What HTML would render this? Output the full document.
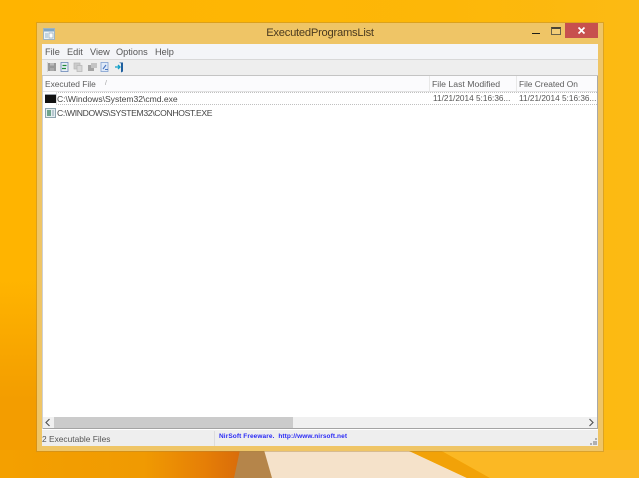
<!DOCTYPE html>
<html>
<head>
<meta charset="utf-8">
<style>
html,body{margin:0;padding:0;width:639px;height:478px;overflow:hidden}
body{position:relative;background:#fcb90f;font-family:"Liberation Sans",sans-serif;font-size:8.5px;color:#555}
div{position:absolute;white-space:nowrap}
.bg{left:0;top:0;width:639px;height:478px;background:linear-gradient(90deg,rgba(255,180,0,1) 0%,rgba(253,183,8,1) 70%,rgba(252,186,20,1) 100%)}
.bg2{left:0;top:280px;width:300px;height:198px;background:linear-gradient(180deg,rgba(243,157,0,0) 0%,rgba(243,157,0,1) 60%)}
.t{line-height:12px;filter:blur(.25px)}
svg{filter:blur(.25px)}
</style>
</head>
<body>
<div class="bg"></div>
<div class="bg2"></div>
<svg style="position:absolute;left:0;top:0" width="639" height="478">
<defs><linearGradient id="o" x1="0" x2="1" y1="0" y2="0"><stop offset="0" stop-color="#f4a000"/><stop offset=".6" stop-color="#f09a02"/><stop offset=".85" stop-color="#e67f06"/><stop offset="1" stop-color="#d96c0a"/></linearGradient></defs>
<polygon points="0,450 240,450 235,478 0,478" fill="url(#o)"/>
<polygon points="240,450 265,450 272,478 234,478" fill="#b5854a"/>
<polygon points="264,450 407,450 467,478 272,478" fill="#f5e2ca"/>
<polygon points="407,450 440,450 490,478 467,478" fill="#f2a208"/>
<polygon points="440,450 639,450 639,478 490,478" fill="#fbb824"/>
</svg>

<!-- window frame -->
<div style="left:37px;top:23px;width:566px;height:428px;background:#efc566;box-shadow:0 0 0 1px rgba(170,130,60,.4)"></div>
<!-- app icon -->
<svg style="position:absolute;left:43px;top:28px" width="12" height="12"><rect x=".5" y=".5" width="11" height="11" fill="#eef3f6" stroke="#9fb4c2"/><rect x="1" y="1" width="10" height="2.500" fill="#7fa6c6"/><rect x="6" y="5" width="4" height="5" fill="#fff" stroke="#8fa6b5" stroke-width=".7"/><rect x="2" y="5" width="3" height="5" fill="#c2d5e2"/></svg>
<!-- title -->
<div class="t" style="left:220px;top:26px;width:200px;text-align:center;font-size:11.200px;letter-spacing:-.25px;line-height:14px;color:#4a3a20">ExecutedProgramsList</div>
<!-- caption buttons -->
<div style="left:532px;top:33px;width:8px;height:1px;background:#1e1e18"></div>
<div style="left:551px;top:27px;width:8px;height:5px;border:1px solid #6b6248;border-top:2px solid #4a4436;background:#f2cd78"></div>
<div style="left:565px;top:23px;width:33px;height:15px;background:#c7504e"></div>
<svg style="position:absolute;left:577px;top:26px" width="9" height="9"><path d="M1.500 1.500L7.500 7.500M7.500 1.500L1.500 7.500" stroke="#fff" stroke-width="1.700"/></svg>

<!-- client -->
<div style="left:42px;top:44px;width:556px;height:402px;background:#fff"></div>
<!-- menu -->
<div style="left:42px;top:44px;width:556px;height:15px;background:#f4f5f8;border-bottom:1px solid #d8d8d8"></div>
<div class="t" style="left:45px;top:46px;font-size:9.200px;color:#555">File</div>
<div class="t" style="left:67px;top:46px;font-size:9.200px;color:#555">Edit</div>
<div class="t" style="left:90px;top:46px;font-size:9.200px;color:#555">View</div>
<div class="t" style="left:116px;top:46px;font-size:9.200px;color:#555">Options</div>
<div class="t" style="left:155px;top:46px;font-size:9.200px;color:#555">Help</div>
<!-- toolbar -->
<div style="left:42px;top:60px;width:556px;height:15px;background:#eeeeee;border-bottom:1px solid #c4c4c4"></div>
<div style="left:47px;top:62px;width:1px;height:10px;background:#d4d4d4"></div>
<svg style="position:absolute;left:48px;top:62px" width="80" height="11">
<rect x="0" y="1" width="8" height="8" fill="#989898"/><rect x="2" y="1" width="4" height="2.500" fill="#bbb"/><rect x="2" y="6" width="4" height="3" fill="#aaa"/>
<rect x="13" y=".5" width="7" height="9" fill="#e8eef6" stroke="#6a88b8" stroke-width=".8"/><path d="M14.500 3.500h4M18 6.500h-4" stroke="#1f8a3a" stroke-width="1.300"/>
<rect x="26" y="1" width="6" height="6" fill="#cbcbcb" stroke="#b4b4b4" stroke-width=".7"/><rect x="29" y="3.500" width="5" height="6" fill="#d8d8d8" stroke="#b4b4b4" stroke-width=".7"/>
<rect x="40" y="3" width="6" height="6" fill="#a4a4a4"/><rect x="43" y="1" width="6" height="5" fill="#c4c4c4"/>
<rect x="53" y=".5" width="7" height="9" fill="#dfeaf8" stroke="#7f9fd0" stroke-width=".8"/><path d="M55 7l3-4M57 7.500h3" stroke="#4a76c0" stroke-width="1.100"/>
<path d="M71 .5h4v9l-2 1v-9z" fill="#1f5f9f"/><path d="M67 5h5M70 3l2 2-2 2" stroke="#12a0c8" stroke-width="1.300" fill="none"/>
</svg>
<!-- list borders -->
<div style="left:42px;top:76px;width:1px;height:353px;background:#d0d0d0"></div>
<div style="left:597px;top:76px;width:1px;height:353px;background:#a8a8a8"></div>
<!-- header -->
<div style="left:43px;top:76px;width:554px;height:15px;background:#fbfbfd;border-bottom:1px solid #e2e2e2"></div>
<div style="left:429px;top:76px;width:1px;height:15px;background:#e8e8e8"></div>
<div style="left:516px;top:76px;width:1px;height:15px;background:#e8e8e8"></div>
<div class="t" style="left:45px;top:78px;font-size:8.400px;color:#5c5c5c">Executed File</div>
<div class="t" style="left:105px;top:78px;color:#a0a0a0;font-size:7px">/</div>
<div class="t" style="left:432px;top:78px;font-size:8.700px;color:#5c5c5c">File Last Modified</div>
<div class="t" style="left:519px;top:78px;font-size:8.350px;color:#5c5c5c">File Created On</div>
<!-- row 1 -->
<div style="left:56px;top:92px;width:541px;height:11px;border-top:1px dotted #c0c0c0;border-bottom:1px dotted #c0c0c0"></div>
<div style="left:56px;top:92px;width:1px;height:13px;background:#dcdcdc"></div>
<div style="left:45px;top:94px;width:11px;height:9px;background:#111"></div>
<div style="left:45px;top:94px;width:11px;height:1px;background:#9aa0a8"></div>
<div class="t" style="left:57px;top:93px;font-size:8.560px;color:#444">C:\Windows\System32\cmd.exe</div>
<div class="t" style="left:433px;top:93px;font-size:8.250px;color:#555">11/21/2014 5:16:36...</div>
<div class="t" style="left:519px;top:93px;font-size:8.250px;color:#555">11/21/2014 5:16:36...</div>
<!-- row 2 -->
<svg style="position:absolute;left:45px;top:108px" width="11" height="10"><rect x=".5" y=".5" width="10" height="9" fill="#e4eef0" stroke="#8ea5b0"/><rect x="2" y="2" width="4" height="6" fill="#6fa48e"/><rect x="7" y="2" width="2" height="6" fill="#b8c8d0"/></svg>
<div class="t" style="left:57px;top:107px;font-size:8.600px;letter-spacing:-.34px;color:#444">C:\WINDOWS\SYSTEM32\CONHOST.EXE</div>
<!-- scrollbar -->
<div style="left:43px;top:417px;width:554px;height:11px;background:#f0f0f0;border-bottom:1px solid #a4a4a4"></div>
<div style="left:54px;top:417px;width:239px;height:11px;background:#cbcbcb"></div>
<svg style="position:absolute;left:44px;top:418px" width="8" height="9"><path d="M5.500 1L2 4.500L5.500 8" stroke="#555" stroke-width="1.200" fill="none"/></svg>
<svg style="position:absolute;left:587px;top:418px" width="8" height="9"><path d="M2.500 1L6 4.500L2.500 8" stroke="#555" stroke-width="1.200" fill="none"/></svg>
<!-- status bar -->
<div style="left:42px;top:430px;width:556px;height:16px;background:#eeeeee"></div>
<div style="left:214px;top:431px;width:1px;height:15px;background:#dcdcdc"></div>
<div class="t" style="left:42px;top:433px;font-size:8.400px;color:#555">2 Executable Files</div>
<div class="t" style="left:219px;top:431px;color:#2a2af5;font-size:6.500px;font-weight:bold;line-height:11px;letter-spacing:.1px">NirSoft Freeware.&nbsp; http://www.nirsoft.net</div>
<svg style="position:absolute;left:590px;top:438px" width="8" height="8" fill="#b0b0b0"><rect x="5" y="0" width="2" height="2"/><rect x="3" y="3" width="2" height="2"/><rect x="5" y="3" width="2" height="2"/><rect x="0" y="5" width="2" height="2"/><rect x="3" y="5" width="2" height="2"/><rect x="5" y="5" width="2" height="2"/></svg>
</body>
</html>
